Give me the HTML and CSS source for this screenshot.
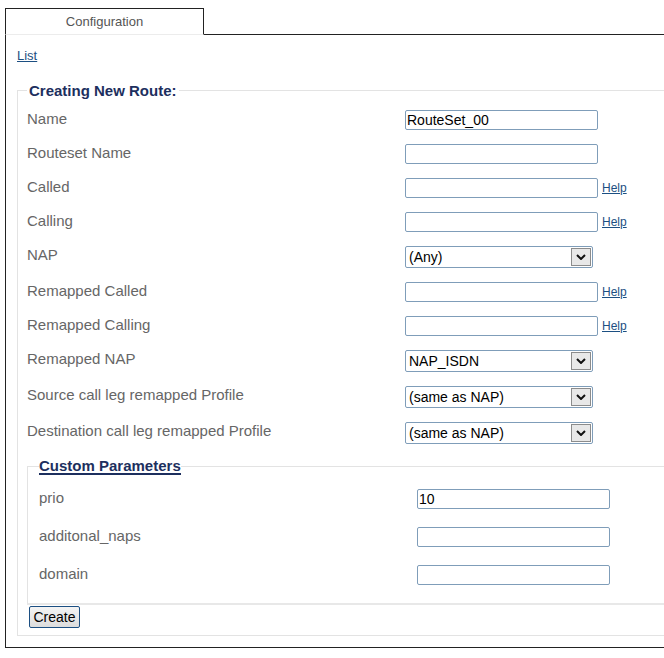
FILE: index.html
```html
<!DOCTYPE html>
<html>
<head>
<meta charset="utf-8">
<link rel="stylesheet" href="styles.css">
</head>
<body>
<div class="tabbar">
  <div class="tab">Configuration</div>
  <div class="tab-fill"></div>
</div>
<div class="panel">
  <a class="list-link" href="#">List</a>
  <fieldset class="main-fs">
    <legend class="main-legend">Creating New Route:</legend>
    <div class="row"><span class="lbl">Name</span><span class="ctl"><input class="txt" type="text" value="RouteSet_00"></span></div>
    <div class="row"><span class="lbl">Routeset Name</span><span class="ctl"><input class="txt" type="text"></span></div>
    <div class="row"><span class="lbl">Called</span><span class="ctl"><input class="txt" type="text"><a class="help" href="#">Help</a></span></div>
    <div class="row"><span class="lbl">Calling</span><span class="ctl"><input class="txt" type="text"><a class="help" href="#">Help</a></span></div>
    <div class="row"><span class="lbl">NAP</span><span class="ctl"><span class="sel-wrap"><select class="sel"><option>(Any)</option></select><span class="sel-btn"><svg width="10" height="6" viewBox="0 0 10 6"><path d="M1 1 L5 5 L9 1" fill="none" stroke="#111" stroke-width="2"/></svg></span></span></span></div>
    <div class="row"><span class="lbl">Remapped Called</span><span class="ctl"><input class="txt" type="text"><a class="help" href="#">Help</a></span></div>
    <div class="row"><span class="lbl">Remapped Calling</span><span class="ctl"><input class="txt" type="text"><a class="help" href="#">Help</a></span></div>
    <div class="row"><span class="lbl">Remapped NAP</span><span class="ctl"><span class="sel-wrap"><select class="sel"><option>NAP_ISDN</option></select><span class="sel-btn"><svg width="10" height="6" viewBox="0 0 10 6"><path d="M1 1 L5 5 L9 1" fill="none" stroke="#111" stroke-width="2"/></svg></span></span></span></div>
    <div class="row"><span class="lbl">Source call leg remapped Profile</span><span class="ctl"><span class="sel-wrap"><select class="sel"><option>(same as NAP)</option></select><span class="sel-btn"><svg width="10" height="6" viewBox="0 0 10 6"><path d="M1 1 L5 5 L9 1" fill="none" stroke="#111" stroke-width="2"/></svg></span></span></span></div>
    <div class="row"><span class="lbl">Destination call leg remapped Profile</span><span class="ctl"><span class="sel-wrap"><select class="sel"><option>(same as NAP)</option></select><span class="sel-btn"><svg width="10" height="6" viewBox="0 0 10 6"><path d="M1 1 L5 5 L9 1" fill="none" stroke="#111" stroke-width="2"/></svg></span></span></span></div>
    <fieldset class="custom-fs">
      <legend class="custom-legend">Custom Parameters</legend>
      <div class="crow"><span class="lbl">prio</span><span class="ctl"><input class="txt" type="text" value="10"></span></div>
      <div class="crow"><span class="lbl">additonal_naps</span><span class="ctl"><input class="txt" type="text"></span></div>
      <div class="crow"><span class="lbl">domain</span><span class="ctl"><input class="txt" type="text"></span></div>
    </fieldset>
    <button class="create-btn" type="button">Create</button>
  </fieldset>
</div>
</body>
</html>
```
FILE: styles.css
```css
html, body {
  margin: 0;
  padding: 0;
  background: #fff;
  overflow: hidden;
}
body {
  padding: 8px 0 0 5px;
  font-family: "Liberation Sans", Arial, sans-serif;
  width: 800px;
}
.tabbar {
  display: flex;
  height: 27px;
}
.tab {
  box-sizing: border-box;
  width: 199px;
  height: 27px;
  border: 1px solid #222;
  border-bottom: 1px solid #ececec;
  text-align: center;
  font-size: 13px;
  line-height: 25px;
  color: #555;
}
.tab-fill {
  flex: 1;
  border-bottom: 1px solid #222;
}
.panel {
  box-sizing: border-box;
  height: 613px;
  border-left: 1px solid #222;
  border-bottom: 1px solid #222;
  padding: 13px 0 0 11px;
}
.list-link {
  display: block;
  font-size: 13px;
  line-height: 15px;
  color: #1c4f82;
  text-decoration: underline;
  width: max-content;
}
.main-fs {
  margin: 19px 0 0 0;
  padding: 4px 0 7px 9px;
  border: 1px solid #e3e3e3;
  border-right: none;
  min-width: 0;
}
.main-legend {
  padding: 0 2px;
  font-size: 15px;
  line-height: 17px;
  font-weight: bold;
  color: #1d2f5e;
}
.row {
  display: grid;
  grid-template-columns: 378px auto;
  align-items: center;
  padding: 7px 0;
}
.crow {
  display: grid;
  grid-template-columns: 378px auto;
  align-items: center;
  padding: 9px 0;
}
.lbl {
  align-self: start;
  font-size: 15px;
  line-height: 17px;
  color: #666;
}
.ctl {
  display: flex;
  align-items: center;
  gap: 4px;
}
.txt {
  box-sizing: border-box;
  width: 193px;
  height: 20px;
  margin: 0;
  padding: 0 1px;
  border: 1px solid #7f9db9;
  border-radius: 2px;
  font-family: "Liberation Sans", Arial, sans-serif;
  font-size: 14px;
  color: #000;
  outline: none;
}
.help {
  font-size: 12px;
  color: #1c4f82;
  text-decoration: underline;
}
.sel-wrap {
  position: relative;
  display: block;
  width: 188px;
  height: 22px;
}
.sel {
  box-sizing: border-box;
  appearance: none;
  -webkit-appearance: none;
  width: 188px;
  height: 22px;
  margin: 0;
  padding: 0 0 0 3px;
  border: 1px solid #7f9db9;
  border-radius: 2px;
  background: #fff;
  font-family: "Liberation Sans", Arial, sans-serif;
  font-size: 14px;
  color: #000;
}
.sel-btn {
  position: absolute;
  right: 2px;
  top: 2px;
  box-sizing: border-box;
  width: 20px;
  height: 18px;
  border: 1px solid #8c8c8c;
  background: #e8e8e8;
  display: flex;
  align-items: center;
  justify-content: center;
  pointer-events: none;
}
.custom-fs {
  margin: 7px 0 0 0;
  padding: 5px 0 9px 11px;
  border: 1px solid #e3e3e3;
  border-bottom: 2px solid #e8e8e8;
  border-right: none;
  min-width: 0;
}
.custom-legend {
  padding: 0;
  font-size: 15px;
  line-height: 15px;
  font-weight: bold;
  color: #1d2f5e;
  border-bottom: 2px solid #1d2f5e;
}
.create-btn {
  display: block;
  box-sizing: border-box;
  margin: 1px 0 0 2px;
  width: 51px;
  height: 22px;
  padding: 0;
  border: 1px solid #1c4f82;
  border-radius: 2px;
  background: linear-gradient(#f4f4f4, #dcdcdc);
  font-family: "Liberation Sans", Arial, sans-serif;
  font-size: 14px;
  color: #000;
}
```
